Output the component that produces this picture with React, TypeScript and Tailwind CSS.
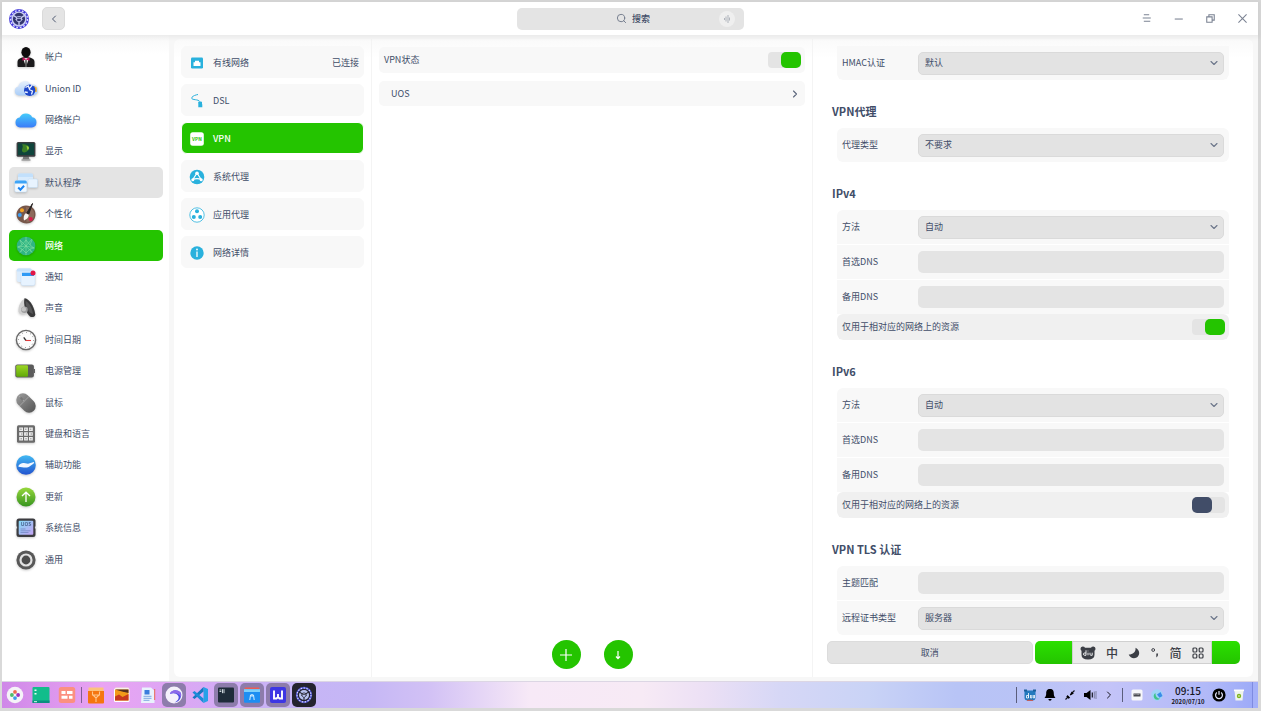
import { useState, type ReactNode } from "react";
import { ChevronDown, ChevronLeft, ChevronRight, Search } from "lucide-react";

/* ---------- sidebar icons (24 x 24) ---------- */

function Icon({ size = "size-6", box = "0 0 24 24", children }: { size?: string; box?: string; children: ReactNode }) {
  return (
    <svg viewBox={box} className={`${size} shrink-0 overflow-visible`} aria-hidden="true">
      {children}
    </svg>
  );
}

const UserIcon = () => (
  <Icon>
    <path d="M3.500 21v-4c0-3 3-4.300 6-4.800h5c3 .5 6 1.800 6 4.800v4q0 .9-1 .9h-15q-1 0-1-.9z" fill="#1b1a1c" />
    <path d="M9 13l3 9 3-9z" fill="#f3f3f3" />
    <path d="M11.300 15h1.400l.4 7h-2.200z" fill="#555" />
    <path d="M8.500 12.200l3.500 1.800 3.500-1.800v3.600L12 14.600l-3.500 1.200z" fill="#c3145c" />
    <ellipse cx="12" cy="7.300" rx="4.600" ry="5.400" fill="#0d0c0d" />
  </Icon>
);

const UnionIcon = () => (
  <Icon>
    <defs>
      <linearGradient id="union" x1="0" y1="0" x2="0" y2="1">
        <stop offset="0" stopColor="#e6effc" />
        <stop offset="1" stopColor="#a9cdf8" />
      </linearGradient>
    </defs>
    <path d="M5 18.500a4.500 4.500 0 0 1-.6-8.900A6.500 6.500 0 0 1 16.500 7.500 5 5 0 0 1 20 18.500z" fill="url(#union)" />
    <path d="M20 9l2.500 1.200q.8 2.400 0 4.800L20 15z" fill="#f7b32b" />
    <circle cx="15.700" cy="13.300" r="5.700" fill="#1d46c9" />
    <path d="M11.500 10.500l2.800-1.500 1 2.800 3-3.800M15 12.500l3.500 1.500-1 3.500M10.800 15l3 .5" stroke="#eef3ff" strokeWidth="1.300" fill="none" />
  </Icon>
);

const CloudIcon = () => (
  <Icon>
    <defs>
      <linearGradient id="cloud" x1="0" y1="0" x2="0" y2="1">
        <stop offset="0" stopColor="#45ccfb" />
        <stop offset="1" stopColor="#3a7bf8" />
      </linearGradient>
    </defs>
    <path d="M6 19.500a5 5 0 0 1-.4-9.900A7 7 0 0 1 18.200 9.200a5.200 5.200 0 0 1-.4 10.300z" fill="url(#cloud)" />
  </Icon>
);

const DisplayIcon = () => (
  <Icon>
    <path d="M9.500 17h5l1 3.500h-7z" fill="#777" />
    <path d="M7.500 20.300h9v1.400h-9z" fill="#999" />
    <rect x="2.600" y="3" width="18.800" height="14.800" rx="1.500" fill="#3a3d3f" />
    <rect x="4" y="4.400" width="16" height="11.600" fill="#0f443c" />
    <path d="M8 5.500c4-1.500 9 2 6.500 5.500s-7 3-6.500 0 1.500-3 0-5.500z" fill="#3c7f27" />
    <path d="M12.500 7c3 0 3 3 1 4z" fill="#9bd23c" />
  </Icon>
);

const DefaultAppsIcon = () => (
  <Icon>
    <rect x="4" y="2.500" width="15" height="9" rx="1.500" fill="#d8ebfd" />
    <path d="M4 6V4q0-1.500 1.500-1.500h12Q19 2.500 19 4v2z" fill="#c2e0fc" />
    <rect x="14" y="8" width="9.500" height="8.500" rx="1.300" fill="#e8f3fe" stroke="#c1dcf6" strokeWidth=".5" />
    <rect x=".8" y="9.500" width="12" height="11.500" rx="1.600" fill="#f2f9ff" stroke="#bddcf8" strokeWidth=".5" />
    <path d="M.8 12.500V11q0-1.600 1.600-1.600h8.800q1.600 0 1.600 1.600v1.500z" fill="#3da4f7" />
    <path d="M4.200 16.500l2.200 2.200 3.700-3.900" stroke="#1b84f2" strokeWidth="2" fill="none" />
  </Icon>
);

const PaletteIcon = () => (
  <Icon>
    <path d="M12 3.500c6 0 10 4 9.500 9.500-.4 5-4 8.500-9 8.500S2.500 17.800 2.500 12.500c0-4.500 4-9 9.500-9z" fill="#77574a" />
    <path d="M12 5c5 0 8.500 3.500 8.200 8-.4 4-3.500 7-7.700 7" fill="#8d6a5b" />
    <circle cx="8" cy="8.300" r="2" fill="#f3a322" />
    <circle cx="5.800" cy="13" r="2" fill="#3e9df0" />
    <circle cx="16.700" cy="17" r="2.100" fill="#d91c4a" />
    <path d="M18.500 1.500L12.800 11l2 1z" fill="#2a2523" stroke="#2a2523" strokeWidth="1" />
    <path d="M11.700 11.200l3 1.500c.2 2.500-2.200 4.800-4.700 5.800-.8-2.600-.3-5.500 1.700-7.300z" fill="#f7f4f1" />
  </Icon>
);

const NetworkIcon = () => (
  <Icon>
    <circle cx="12" cy="12" r="9.300" fill="#2fb583" />
    <path
      d="M12 3v18M6 6l6 6 6-7M3.500 13l8.500-1 8.500 2M6 18.500l6-6.500 6 6.500M6 6l2 5-4 2 4 2-1.500 3M18 6l-2 5 4 3-4 1 1.500 3M8 11l4-5 4 5M8 15l4 4 4-4"
      stroke="#86dfa4"
      strokeWidth=".6"
      fill="none"
    />
  </Icon>
);

const NotifyIcon = () => (
  <Icon>
    <rect x="2.800" y="3.500" width="15" height="13.500" rx="1.800" fill="#dcecfc" />
    <path d="M2.800 6.500V5.300q0-1.800 1.800-1.800h11.400q1.800 0 1.800 1.800v1.200z" fill="#c6e1fb" />
    <rect x="7" y="8" width="14" height="12.500" rx="1.800" fill="#e7f3ff" stroke="#c4ddf5" strokeWidth=".5" />
    <path d="M8 7.800h12v3.200H8z" fill="#2f9af5" />
    <circle cx="19" cy="8" r="2.500" fill="#e31546" />
  </Icon>
);

const SoundIcon = () => (
  <Icon>
    <path d="M11 2.500C7 4.500 4 10 4.500 15.500c.5 3.500 5 3.500 8.500 2z" fill="#d0d0d0" />
    <path d="M10.500 2.200c4 0 9.500 6.800 10.800 16.300-.3 2.500-2.800 3-5 2.200C12 17 9 9 10.500 2.200z" fill="#39393a" />
    <path d="M11.500 5c3 1 6.500 6 7.500 13-3.500-.5-7.500-6.500-7.500-13z" fill="#555556" />
    <circle cx="10.500" cy="13.700" r="3.300" fill="#9c9c9d" />
    <circle cx="9.800" cy="13.200" r="2.200" fill="#c4c4c4" />
  </Icon>
);

const ClockIcon = () => (
  <Icon>
    <circle cx="12" cy="12" r="9.600" fill="#fdfdfd" stroke="#676767" strokeWidth="1.400" />
    <circle cx="12" cy="12" r="7.600" fill="none" stroke="#555" strokeWidth="1" strokeDasharray=".7 3.279" />
    <path d="M12 12.500L9.700 9.300" stroke="#333" strokeWidth="1.300" />
    <path d="M11.500 12.500H17" stroke="#e23c3c" strokeWidth="1.100" />
  </Icon>
);

const BatteryIcon = () => (
  <Icon>
    <defs>
      <linearGradient id="battery" x1="0" y1="0" x2="0" y2="1">
        <stop offset="0" stopColor="#9cd625" />
        <stop offset="1" stopColor="#61a908" />
      </linearGradient>
    </defs>
    <rect x="1.300" y="5.500" width="18.600" height="13" rx="2" fill="#5b5b5b" />
    <rect x="19.900" y="10" width="1" height="4" fill="#555" />
    <rect x="2.200" y="6.300" width="11.800" height="11.400" rx="1.200" fill="url(#battery)" />
  </Icon>
);

const MouseIcon = () => (
  <Icon>
    <defs>
      <linearGradient id="mouse" x1="0" y1="0" x2="0" y2="1">
        <stop offset="0" stopColor="#969696" />
        <stop offset="1" stopColor="#5a5a5a" />
      </linearGradient>
    </defs>
    <g transform="rotate(-45 12 12)">
      <rect x="5.300" y="1" width="13.400" height="22" rx="6.700" fill="url(#mouse)" />
      <path d="M5.300 9.500h13.400M12 1v8.500" stroke="#b8b8b8" strokeWidth=".6" />
      <rect x="11" y="4" width="2" height="3.600" rx="1" fill="#777" />
    </g>
  </Icon>
);

const KeyboardIcon = () => (
  <Icon>
    <rect x="3" y="3.300" width="18" height="17.400" rx="1.500" fill="#6b6b6b" />
    <path
      d="M5.200 7.200h13.600M5.200 12h13.600M5.200 16.800h13.600"
      stroke="#ededed"
      strokeWidth="3.400"
      strokeDasharray="3.800 1.100"
    />
    <path d="M6.200 7.200h12M7 12h11M6.500 16.800h11" stroke="#8a8a8a" strokeWidth="1" strokeDasharray="1.500 3.300" />
  </Icon>
);

const AccessIcon = () => (
  <Icon>
    <defs>
      <linearGradient id="access" x1="0" y1="0" x2="0" y2="1">
        <stop offset="0" stopColor="#42baf3" />
        <stop offset="1" stopColor="#2253cf" />
      </linearGradient>
    </defs>
    <circle cx="12" cy="12" r="9.800" fill="url(#access)" />
    <path d="M4.500 12.700c1.500-2 3.500-3 5.500-2.600l4 .6 5.800-1.600c.6.600.2 1.400-.8 1.900-2 1.400-3.500 3-6 3.500-3 .4-5.500-.7-8.500-.8z" fill="#f3f8ff" />
  </Icon>
);

const UpdateIcon = () => (
  <Icon>
    <defs>
      <linearGradient id="update" x1="0" y1="0" x2="0" y2="1">
        <stop offset="0" stopColor="#97d83c" />
        <stop offset="1" stopColor="#379420" />
      </linearGradient>
    </defs>
    <circle cx="12" cy="12" r="9.500" fill="url(#update)" />
    <path d="M12 17V7.500M8 11l4-3.800 4 3.800" stroke="#fff" strokeWidth="1.300" fill="none" />
  </Icon>
);

const SystemIcon = () => (
  <Icon>
    <defs>
      <linearGradient id="system" x1="0" y1="0" x2="1" y2="1">
        <stop offset="0" stopColor="#84d9f7" />
        <stop offset="1" stopColor="#c3a3f3" />
      </linearGradient>
    </defs>
    <rect x="2.500" y="2.500" width="19" height="18.500" rx="2.500" fill="#3c3c40" />
    <rect x="4.700" y="4.700" width="14.600" height="14" rx="1" fill="url(#system)" />
    <path d="M2.500 10.500v2M21.500 10.500v2" stroke="#ddd" strokeWidth="1.200" />
    <text x="12" y="10.200" textAnchor="middle" fontSize="5" fontWeight="700" fill="#4b6794">
      UOS
    </text>
    <path d="M6.500 13h5M6.500 14.800h10M6.500 16.500h8" stroke="#6f83bd" strokeWidth=".7" />
  </Icon>
);

const GeneralIcon = () => (
  <Icon>
    <circle cx="12" cy="12" r="9.600" fill="#585858" />
    <circle cx="12" cy="12" r="5.500" fill="#4c4c4c" stroke="#e2e2e2" strokeWidth="2.200" />
  </Icon>
);

function GearWheel({ ring, fill, spoke }: { ring: string; fill: string; spoke: string }) {
  return (
    <>
      <circle cx="12" cy="12" r="9.600" fill={fill} stroke={ring} strokeWidth="2.600" />
      <circle cx="12" cy="12" r="9.300" fill="none" stroke="#dcdcff" strokeWidth="1.500" strokeDasharray="2 1.896" />
      <circle cx="12" cy="12" r="5" fill="none" stroke={spoke} strokeWidth="3.400" />
      <path d="M12 12v8M12 12L5 7.500M12 12l7-4.500" stroke={fill} strokeWidth="1.500" />
      <circle cx="12" cy="12" r="2.500" fill={spoke} />
      <path d="M8 12.500q4-3 8 0" stroke={fill} strokeWidth="1" fill="none" />
    </>
  );
}

/* ---------- network list icons (16 x 16) ---------- */

const BLUE = "#29b1dd";

const WiredIcon = () => (
  <Icon size="size-4" box="0 0 16 16">
    <rect x="2" y="2.500" width="12" height="11" rx="1.200" fill={BLUE} />
    <path d="M4.500 11V7.300H6V5.800h4v1.500h1.500V11z" fill="#fff" />
  </Icon>
);
const DslIcon = () => (
  <Icon size="size-4" box="0 0 16 16">
    <path d="M9 1.500C5.500 2 1.500 4.200 3 5.800c1.500 1.400 8.300.2 8.300 4.200" stroke={BLUE} strokeWidth="1" fill="none" />
    <path d="M9.200 8.800h3.800v2.300l.3.400v2.800H9.300v-2.800z" fill={BLUE} />
  </Icon>
);
const VpnIcon = () => (
  <Icon size="size-4" box="0 0 16 16">
    <rect x="1.200" y="1.200" width="13.600" height="13.600" rx="2.500" fill="#fff" />
    <text x="8" y="9.800" textAnchor="middle" fontSize="4.800" fontWeight="700" fill="#24c400">
      VPN
    </text>
  </Icon>
);
const ProxyIcon = () => (
  <Icon size="size-4" box="0 0 16 16">
    <circle cx="8" cy="8" r="7.300" fill={BLUE} />
    <path d="M8 4L3.500 11M8 4l4.500 7M3.500 10.800Q8 8.500 12.500 10.800" stroke="#fff" strokeWidth="1.200" fill="none" />
    <circle cx="8" cy="4.300" r="1.800" fill="#fff" />
    <circle cx="3.800" cy="10.800" r="1.500" fill="#fff" />
    <circle cx="12.200" cy="10.800" r="1.500" fill="#fff" />
  </Icon>
);
const AppProxyIcon = () => (
  <Icon size="size-4" box="0 0 16 16">
    <circle cx="8" cy="8" r="7.200" fill="#fff" stroke={BLUE} strokeWidth=".8" />
    <circle cx="8" cy="4.300" r="2" fill={BLUE} />
    <circle cx="4.800" cy="10" r="2" fill={BLUE} />
    <circle cx="11.200" cy="10" r="2" fill={BLUE} />
  </Icon>
);
const InfoIcon = () => (
  <Icon size="size-4" box="0 0 16 16">
    <circle cx="8" cy="8" r="6.700" fill={BLUE} />
    <path d="M8 6.500V12" stroke="#fff" strokeWidth="1.300" />
    <circle cx="8" cy="4.500" r=".9" fill="#fff" />
  </Icon>
);

/* ---------- shared controls ---------- */

function Toggle({ label, id, on }: { label: string; id: string; on: boolean }) {
  return (
    <>
      <label htmlFor={id} className="flex-1">
        {label}
      </label>
      <input
        id={id}
        type="checkbox"
        defaultChecked={on}
        className="h-4 w-[33px] appearance-none rounded bg-[#e4e4e4] before:block before:h-4 before:w-5 before:rounded-[5px] before:bg-[#414d68] checked:before:ml-[13px] checked:before:bg-[#24c400]"
      />
    </>
  );
}

function Field({ label, id, options, last }: { label: string; id: string; options?: string[]; last?: boolean }) {
  return (
    <div className={`flex h-[34px] items-center bg-[#f8f8f8] px-[5px] ${last ? "rounded-b-md" : ""}`}>
      <label htmlFor={id} className="w-[76px] shrink-0">
        {label}
      </label>
      {options ? (
        <div className="relative flex-1">
          <select
            id={id}
            className="block h-[23px] w-full appearance-none rounded-[5px] border border-[#dadada] bg-[#e3e3e3] px-[6px]"
          >
            {options.map((o) => (
              <option key={o}>{o}</option>
            ))}
          </select>
          <ChevronDown className="pointer-events-none absolute top-[5px] right-1 size-3 text-[#6b758a]" strokeWidth={2.2} />
        </div>
      ) : (
        <input id={id} type="text" className="block h-[22px] min-w-0 flex-1 rounded-[5px] bg-[#e4e4e4] px-2 outline-none" />
      )}
    </div>
  );
}

function Section({ title, children }: { title?: string; children: ReactNode }) {
  return (
    <section>
      {title && <h2 className="flex h-12 items-center pt-[14px] text-[11px] font-bold">{title}</h2>}
      <div className={`ml-[5px] flex flex-col gap-px overflow-hidden ${title ? "rounded-md" : "rounded-b-md"}`}>{children}</div>
    </section>
  );
}

function IpSection({ title, on }: { title: string; on: boolean }) {
  return (
    <Section title={title}>
      <Field label="方法" id={`${title}-method`} options={["自动", "手动"]} />
      <Field label="首选DNS" id={`${title}-dns1`} />
      <div>
        <Field label="备用DNS" id={`${title}-dns2`} />
        <div className="flex h-[26px] items-center rounded-md bg-[#f0f0f0] pr-1 pl-[5px]">
          <Toggle label="仅用于相对应的网络上的资源" id={`${title}-only`} on={on} />
        </div>
      </div>
    </Section>
  );
}

/* ---------- data ---------- */

const MODULES: [string, () => ReactNode][] = [
  ["帐户", UserIcon],
  ["Union ID", UnionIcon],
  ["网络帐户", CloudIcon],
  ["显示", DisplayIcon],
  ["默认程序", DefaultAppsIcon],
  ["个性化", PaletteIcon],
  ["网络", NetworkIcon],
  ["通知", NotifyIcon],
  ["声音", SoundIcon],
  ["时间日期", ClockIcon],
  ["电源管理", BatteryIcon],
  ["鼠标", MouseIcon],
  ["键盘和语言", KeyboardIcon],
  ["辅助功能", AccessIcon],
  ["更新", UpdateIcon],
  ["系统信息", SystemIcon],
  ["通用", GeneralIcon],
];

const NETWORKS: [string, () => ReactNode, string?][] = [
  ["有线网络", WiredIcon, "已连接"],
  ["DSL", DslIcon],
  ["VPN", VpnIcon],
  ["系统代理", ProxyIcon],
  ["应用代理", AppProxyIcon],
  ["网络详情", InfoIcon],
];

/* ---------- taskbar ---------- */

function Dock({ label, active, dark, children }: { label: string; active?: boolean; dark?: boolean; children: ReactNode }) {
  return (
    <button
      type="button"
      aria-label={label}
      className={`flex h-6 w-6 items-center justify-center rounded-[5px] ${dark ? "bg-[#25242f]" : active ? "bg-[#8d7cab]" : ""}`}
    >
      <svg viewBox="0 0 18 18" className="size-[18px]" aria-hidden="true">
        {children}
      </svg>
    </button>
  );
}

function Tray({ label, children }: { label: string; children: ReactNode }) {
  return (
    <button type="button" aria-label={label} className="flex size-[14px] items-center justify-center">
      <svg viewBox="0 0 14 14" className="size-[14px]" aria-hidden="true">
        {children}
      </svg>
    </button>
  );
}

function Taskbar() {
  return (
    <footer className="flex h-[27px] shrink-0 items-center justify-between border-t border-[#dcd6e4] bg-[linear-gradient(90deg,#cf88e8_0%,#e9a4f3_8%,#dca6f4_14%,#c7b4f6_22%,#c5b7f5_29%,#d2c1f5_34%,#f7e9f7_42%,#f7eaf5_51%,#ece0f5_56%,#d6d7f6_62%,#c9d3f6_69%,#b8c4f6_76%,#b9c3f6_82%,#c4c4f8_88%,#b1b9f8_96%,#9ba9f8_100%)] pl-px">
      <nav aria-label="任务栏" className="flex items-center gap-[2px]">
        <Dock label="启动器">
          <circle cx="9" cy="9" r="8.300" fill="#f5f3f8" />
          <circle cx="9" cy="5.900" r="1.900" fill="#f06b4d" />
          <circle cx="5.900" cy="9" r="1.900" fill="#4ebc6a" />
          <circle cx="12.100" cy="9" r="1.900" fill="#9c2fbf" />
          <circle cx="9" cy="12.100" r="1.900" fill="#3c9ce8" />
        </Dock>
        <Dock label="桌面">
          <rect x=".5" y="1" width="17" height="16" rx="1" fill="#12bd8b" />
          <path d="M2.500 3.500h2v1.600h-2zM2.500 7h2v1.600h-2z" fill="#e8fff4" />
          <path d="M.5 14.500h17V17H.5z" fill="#0b8f80" />
          <path d="M2 15.700h3" stroke="#d5ffef" />
        </Dock>
        <Dock label="多任务视图">
          <rect x=".8" y="1" width="16.400" height="16" rx="2.500" fill="#fb9080" />
          <path d="M3.500 5h4v3h-4zM9 5h5.500v3H9zM3.500 9.700h6v3h-6zM11 9.700h3.500v3H11z" fill="#fff" />
        </Dock>
        <span className="h-4 w-px bg-[#7f5f93]" />
        <Dock label="应用商店">
          <path d="M1.500 1.500h15V6h-15z" fill="#fcc27c" />
          <path d="M1 5h16v11.500q0 1-1 1H2q-1 0-1-1z" fill="#f5760f" />
          <path d="M5.500 5.500V9h7V5.500M6 9l3 3 3-3M9 12v4" stroke="#ffc78c" strokeWidth="1.100" fill="none" />
        </Dock>
        <Dock label="相册">
          <rect x="2" y="1.500" width="14" height="5" rx="1" fill="#f2e3d3" />
          <rect x="1" y="2.500" width="15.500" height="13.500" rx="1.300" fill="#fff" />
          <path d="M2 3.500h13.500v11H2z" fill="#f29a1a" />
          <path d="M2 10.500l4-2 3.500 2.500 6-3v6.500H2z" fill="#c8391f" />
          <path d="M2 3.500h13.500V7L9 5.500z" fill="#54301f" />
        </Dock>
        <Dock label="文本编辑器">
          <path d="M3 1.500h9l3.500 3.300V17H2z" fill="#e9f2fd" />
          <path d="M5.500 4h5v4.500h-5z" fill="#3b7ddd" />
          <path d="M4.500 10.300h8M4.500 12.300h8M4.500 14.300h6" stroke="#7ea8e0" />
          <path d="M15.700 3v11" stroke="#e96b52" strokeWidth="1" />
        </Dock>
        <Dock label="浏览器" active>
          <circle cx="9" cy="9" r="8.500" fill="#f4f1fb" />
          <path d="M5 8c1-4 7-5 10.500-1.500 2 3-.5 9.500-6 10 4-2 5-5 3.500-7-1.700-2.300-5-2.700-8-1.500z" fill="#4c4de0" />
          <path d="M5 8C6 4 12 3 15.500 6.500c.8 1.200.9 3 .2 4.700C14.500 7.500 9 6 5 8z" fill="#8c69ea" />
        </Dock>
        <Dock label="代码编辑器">
          <path d="M12.500 1L17 3v12l-4.500 2z" fill="#25a1e8" />
          <path d="M12.500 1v4.500L3.500 13 1.500 11.500z" fill="#1478c2" />
          <path d="M12.500 17v-4.500L3.500 5 1.500 6.500z" fill="#1b8bd8" />
        </Dock>
        <Dock label="终端" active>
          <rect x="1" y="1.500" width="16" height="15" rx="1" fill="#1f2c3a" />
          <path d="M2.500 4h1.800M2.500 5.500h1.800M5.500 3.200v4M7 3.200v4" stroke="#dfe6ec" strokeWidth=".9" />
        </Dock>
        <Dock label="文件管理器" active>
          <path d="M1 4l1-2.500h14L17 4z" fill="#eb5d54" />
          <rect x="1" y="3.200" width="16" height="13.500" rx="1" fill="#1d8ef2" />
          <path d="M1 3.200h16V6H1z" fill="#7dd0fb" />
          <path d="M6.800 14l.7-5h3l.7 5M9 8v3" stroke="#d8f0ff" strokeWidth="1" fill="none" />
        </Dock>
        <Dock label="文字处理" active>
          <rect x="1" y="1" width="16" height="16" rx="2" fill="#3d36e4" />
          <path d="M5 4.500v8h2.500L9 11l1.500 1.500H13v-8M9 8v3" stroke="#fff" strokeWidth="1.900" fill="none" />
        </Dock>
        <Dock label="控制中心" dark>
          <g transform="scale(.75)">
            <GearWheel ring="#4b50c9" fill="#25242f" spoke="#b8c2ee" />
          </g>
        </Dock>
      </nav>

      <div className="flex items-center text-[#15161f]">
        <span className="mr-[6px] h-4 w-px bg-[#5b5e7c]" />
        <div className="flex items-center gap-[6px]">
          <Tray label="输入法">
            <path d="M1.500 2.500h11v7q0 3-3 3h-5q-3 0-3-3z" fill="#2379bd" />
            <path d="M1 1.500h3v2H1zM10 1.500h3v2h-3z" fill="#1a5e99" />
            <path d="M3.500 10V7.500h2V10zM5.500 5v5M7.500 7v3h1.300V7M10.300 7v3h1.200V7" stroke="#fff" strokeWidth=".8" fill="none" />
            <path d="M4 12.300h6" stroke="#d64f3c" />
          </Tray>
          <Tray label="通知中心">
            <path d="M7 1c3 0 3.800 2 3.800 4.500 0 2 .5 3 1.700 4.500h-11c1.200-1.500 1.700-2.500 1.700-4.500C3.200 3 4 1 7 1zM5.300 11h3.400q-.3 1.700-1.700 1.700T5.300 11z" />
          </Tray>
          <Tray label="网络连接">
            <path d="M2.500 11.500l3-3M8.500 5.500l3-3" stroke="#15161f" strokeWidth="1.200" />
            <path d="M4.500 7l2.700 2.700-1.700 1L3.300 8.700zM6.800 6.800l2-3.300 2 2-3.300 2z" />
          </Tray>
          <Tray label="音量">
            <path d="M1 5h2.500L7.500 2v10l-4-3H1z" />
            <path d="M9.300 4.500v5" stroke="#15161f" strokeWidth="1.200" />
            <path d="M11.300 3.500v7M13 3v8" stroke="#7d80a2" strokeWidth="1" />
          </Tray>
          <button type="button" aria-label="展开托盘">
            <ChevronRight className="size-3" strokeWidth={2} />
          </button>
        </div>
        <span className="mr-[7px] ml-[7px] h-[14px] w-px bg-[#5b5e7c]" />
        <div className="flex items-center gap-[6px]">
          <Tray label="屏幕键盘">
            <rect x="1.500" y="1.500" width="11" height="11" rx="1.500" fill="#f7f7fa" />
            <path d="M3.500 5.500h7v3h-7z" fill="#4a4a50" />
            <path d="M4.300 6.500h5.500" stroke="#ddd" strokeWidth=".6" strokeDasharray=".8 .5" />
          </Tray>
          <Tray label="系统更新">
            <circle cx="7" cy="7" r="5.700" fill="#9fd3f7" />
            <path d="M5.500 5a3.600 3.600 0 1 0 4.500 5.500C7 10.500 5.300 8 5.500 5z" fill="#3fc389" />
            <path d="M7 6.500l3.500-2.500 2 4-3 1.800z" fill="#3a8be9" />
          </Tray>
          <time dateTime="2020-07-10T09:15" className="flex w-[36px] flex-col items-center font-medium">
            <span className="text-[10px] leading-[12px]">09:15</span>
            <span className="text-[6px] leading-[9px] font-bold">2020/07/10</span>
          </time>
          <Tray label="关机">
            <circle cx="7" cy="7" r="6.600" />
            <path d="M4.900 4.500a3.400 3.400 0 1 0 4.200 0M7 3v3.800" stroke="#e8e9ff" strokeWidth="1.200" fill="none" />
          </Tray>
          <Tray label="回收站">
            <path d="M2.500 2.500h9l-1 10h-7z" fill="#eef3ec" />
            <path d="M2 1.500h10v1.700H2z" fill="#fdfdfd" />
            <circle cx="7" cy="8" r="2.200" fill="#7fb51c" />
            <circle cx="7" cy="8" r=".8" fill="#eef3ec" />
          </Tray>
        </div>
        <button type="button" aria-label="显示桌面" className="ml-[6px] h-[26px] w-[6px] border-l border-[#7e8be0] bg-[#a4b0f9]" />
      </div>
    </footer>
  );
}

/* ---------- page ---------- */

export default function App() {
  const [module, setModule] = useState("网络");
  const [network, setNetwork] = useState("VPN");

  return (
    <div className="flex min-h-screen flex-col border-2 border-r-[3px] border-b-[3px] border-[#d9d9d9] bg-[#f7f7f7] font-['Noto_Sans_CJK_SC','Noto_Sans',sans-serif] text-[9px] leading-[14px] text-[#414d68]">
      <header className="relative grid h-[33px] shrink-0 grid-cols-[1fr_227px_1fr] items-center bg-white shadow-[0_1px_4px_2px_rgba(0,0,0,0.05)]">
        <div className="flex items-center gap-3 pl-[6px]">
          <Icon size="size-[22px]">
            <GearWheel ring="#4137d8" fill="#c9cdf3" spoke="#33366e" />
          </Icon>
          <button
            type="button"
            aria-label="返回"
            className="flex size-[23px] items-center justify-center rounded-[5px] border border-[#dadada] bg-[#e4e4e4]"
          >
            <ChevronLeft className="size-3 text-[#4d5870]" strokeWidth={2} />
          </button>
        </div>
        <label className="relative flex h-[22px] items-center justify-center gap-[5px] rounded-[5px] bg-[#e4e4e4] pl-[6px]">
          <Search className="size-[11px] text-[#6d7688]" strokeWidth={2} />
          <input
            type="text"
            aria-label="搜索"
            placeholder="搜索"
            className="font-medium outline-none [field-sizing:content] placeholder:text-[#414d68]"
          />
          <button
            type="button"
            aria-label="语音输入"
            className="absolute top-[3px] right-[9px] flex size-4 items-center justify-center rounded-full bg-[#efefef]"
          >
            <svg viewBox="0 0 10 10" className="size-[10px]" stroke="#a0a4ae" strokeWidth=".8" aria-hidden="true">
              <path d="M2.500 4v2M4 2.500v5M6 1v8M7.500 3.500v3" />
            </svg>
          </button>
        </label>
        <div className="flex items-center justify-end gap-[17px] pr-[8px]">
          {(
            [
              ["菜单", "M4.500 3.500h5M3.500 6.500h7.500M4.500 9.500h6"],
              ["最小化", "M3.500 7.500h7.500"],
              ["还原", "M3.500 5.500h5v5h-5zM5.500 5.500v-2h5v5h-2"],
              ["关闭", "M3.200 3.200l7.600 7.600M10.800 3.200l-7.600 7.600"],
            ] as const
          ).map(([label, d]) => (
            <button key={label} type="button" aria-label={label}>
              <svg viewBox="0 0 14 14" className="size-[15px]" fill="none" stroke="#7b8393" strokeWidth="1" aria-hidden="true">
                <path d={d} />
              </svg>
            </button>
          ))}
        </div>
      </header>

      <div className="flex flex-1">
        <nav aria-label="模块" className="w-[167px] shrink-0 bg-linear-to-b from-[#f8f8f8] to-white to-3% pt-[6px]">
          <ul className="flex h-[534px] flex-col">
            {MODULES.map(([name, ModuleIcon]) => (
              <li key={name} className="flex flex-1 items-center pr-[6px] pl-[7px]">
                <button
                  type="button"
                  onClick={() => setModule(name)}
                  className={`flex h-[31px] w-full items-center gap-[7px] rounded-[5px] pt-px pl-[5px] ${
                    module === name ? "bg-[#24c400] font-medium text-white" : name === "默认程序" ? "bg-[#e4e4e4]" : ""
                  }`}
                >
                  <span className="drop-shadow-[0_1px_1px_rgba(0,0,0,0.2)]">
                    <ModuleIcon />
                  </span>
                  {name}
                </button>
              </li>
            ))}
          </ul>
        </nav>

        <main className="mt-1 mr-[5px] mb-1 ml-[5px] grid flex-1 grid-cols-[198px_1fr_440px] rounded-md bg-linear-to-b from-[#fafafa] to-white to-3%">
          <ul className="flex flex-col gap-[6px] border-r border-[#f4f4f4] px-[7px] pt-[7px]">
            {NETWORKS.map(([name, NetIcon, status]) => (
              <li key={name}>
                <button
                  type="button"
                  onClick={() => setNetwork(name)}
                  className={`flex h-8 w-full items-center gap-2 rounded-md border pt-px pr-1 pl-[7px] ${
                    network === name ? "border-white bg-[#24c400] font-medium text-white" : "border-[#f8f8f8] bg-[#f8f8f8]"
                  }`}
                >
                  <NetIcon />
                  <span className="flex-1 text-left">{name}</span>
                  {status && <span>{status}</span>}
                </button>
              </li>
            ))}
          </ul>

          <section aria-label="VPN" className="flex flex-col border-r border-[#f4f4f4] px-[7px] pt-[8px] pb-[8px]">
            <div className="flex h-[26px] items-center rounded-[5px] bg-[#f8f8f8] pr-1 pl-[5px]">
              <Toggle label="VPN状态" id="vpn-state" on />
            </div>
            <button type="button" className="mt-2 flex h-[25px] items-center justify-between rounded-[5px] bg-[#f8f8f8] pr-1 pl-3">
              UOS
              <ChevronRight className="size-3 text-[#5d677d]" strokeWidth={2.2} />
            </button>
            <div className="mt-auto flex justify-center gap-[23px]">
              <button type="button" aria-label="添加" className="flex size-[29px] items-center justify-center rounded-full bg-[#24c400]">
                <svg viewBox="0 0 12 12" className="size-3" stroke="#fff" strokeWidth="1.200" aria-hidden="true">
                  <path d="M6 0v12M0 6h12" />
                </svg>
              </button>
              <button type="button" aria-label="导入" className="flex size-[29px] items-center justify-center rounded-full bg-[#24c400]">
                <svg viewBox="0 0 12 12" className="size-3" fill="none" stroke="#fff" strokeWidth="1.200" aria-hidden="true">
                  <path d="M6 2v8M4 7.500l2 2.200 2-2.200" />
                </svg>
              </button>
            </div>
          </section>

          <form className="flex flex-col pt-[7px] pr-6 pl-[19px]" onSubmit={(e) => e.preventDefault()}>
            <Section>
              <Field label="HMAC认证" id="hmac" options={["默认"]} last />
            </Section>
            <Section title="VPN代理">
              <Field label="代理类型" id="proxy-type" options={["不要求"]} />
            </Section>
            <IpSection title="IPv4" on />
            <IpSection title="IPv6" on={false} />
            <Section title="VPN TLS 认证">
              <Field label="主题匹配" id="subject" />
              <Field label="远程证书类型" id="cert-type" options={["服务器"]} />
            </Section>
            <div className="mt-auto -mr-[11px] -ml-[5px] mb-[13px] grid grid-cols-2 gap-[2px] pt-[6px]">
              <button type="button" className="h-[23px] rounded-[5px] border border-[#dcdcdc] bg-[#e3e3e3]">
                取消
              </button>
              <div className="relative">
                <button type="submit" aria-label="保存" className="block h-[23px] w-full rounded-[5px] bg-linear-to-b from-[#2be000] to-[#24c400]" />
                <div className="absolute inset-y-0 right-[28px] left-[37px] flex items-center justify-between border border-[#d0d0d0] bg-[#ebebeb] px-[7px] text-[12px] font-medium text-[#3b3e45]">
                  <svg viewBox="0 0 16 14" className="h-[14px] w-4" aria-hidden="true">
                    <path d="M2.500.5q2 0 2.500 1.200h6Q11.500.5 13.500.5q2 .3 2 2.200 0 1.300-1 2v4Q14.500 13.500 8 13.500T1.500 8.700v-4q-1-.7-1-2 0-1.900 2-2.200z" fill="#3b3e45" />
                    <path d="M6 4.300v5H4.500q-1 0-1-1.200T4.600 7H6M8 6.700v2.600M10 6.700v1.600q0 1 1 1h1.200V6.700M8 4.700v.6" stroke="#fff" strokeWidth=".9" fill="none" />
                  </svg>
                  <span>中</span>
                  <svg viewBox="0 0 12 12" className="size-3" aria-hidden="true">
                    <path d="M7.500.8c.5 3.700-2 6.700-6.800 6.700C2.200 11.300 7 12.500 9.900 9.500 12.500 6.500 11 2.300 7.500.8z" fill="#3b3e45" />
                  </svg>
                  <svg viewBox="0 0 8 12" className="h-3 w-2" aria-hidden="true">
                    <circle cx="2.200" cy="3" r="1.400" fill="none" stroke="#3b3e45" />
                    <path d="M5.300 6.500h1.800q.3 2.600-1.800 4" fill="#3b3e45" />
                  </svg>
                  <span>简</span>
                  <svg viewBox="0 0 12 12" className="size-3" fill="none" stroke="#3b3e45" strokeWidth="1.200" aria-hidden="true">
                    <rect x="1" y="1" width="3.800" height="4" rx="1" />
                    <rect x="7.200" y="1" width="3.800" height="4" rx="1" />
                    <rect x="1" y="7" width="3.800" height="4" rx="1" />
                    <rect x="7.200" y="7" width="3.800" height="4" rx="1" />
                  </svg>
                </div>
              </div>
            </div>
          </form>
        </main>
      </div>

      <Taskbar />
    </div>
  );
}
